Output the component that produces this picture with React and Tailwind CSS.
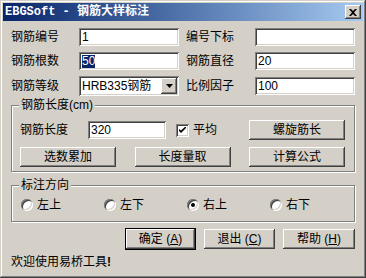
import React from 'react';

const raised = 'shadow-[inset_-1px_-1px_#404040,inset_1px_1px_#ffffff,inset_-2px_-2px_#808080]';
const sunken = 'shadow-[inset_1px_1px_#808080,inset_-1px_-1px_#ffffff,inset_2px_2px_#404040,inset_-2px_-2px_#d4d0c8]';

const Field = ({ value, selected, width = 'w-[100px]' }) => (
  <div className={`${width} h-[18px] bg-white ${sunken} flex items-center pl-[3px]`}>
    {selected ? (
      <span className="bg-[#0a246a] text-white leading-[13px]">{value}</span>
    ) : (
      <span className="leading-[13px]">{value}</span>
    )}
  </div>
);

const Button = ({ children, width = 'w-[96px]', isDefault }) => {
  if (isDefault) {
    return (
      <div className={`${width} h-[22px] border border-black`}>
        <div className={`h-full bg-[#d4d0c8] ${raised} flex items-center justify-center`}>{children}</div>
      </div>
    );
  }
  return (
    <div className={`${width} h-[20px] bg-[#d4d0c8] ${raised} flex items-center justify-center`}>{children}</div>
  );
};

const Radio = ({ label, checked }) => (
  <div className="flex items-center gap-[4px]">
    <div className={`w-[12px] h-[12px] rounded-full bg-white ${sunken} flex items-center justify-center`}>
      {checked && <div className="w-[4px] h-[4px] rounded-full bg-black" />}
    </div>
    <span>{label}</span>
  </div>
);

const Group = ({ title, className, children }) => (
  <div className={`relative border border-[#808080] shadow-[1px_1px_0_#ffffff,inset_1px_1px_0_#ffffff] ${className}`}>
    <span className="absolute left-[7px] top-[-8px] bg-[#d4d0c8] px-[2px] leading-[14px]">{title}</span>
    {children}
  </div>
);

export default function App() {
  return (
    <div className="w-[366px] h-[278px] bg-[#d4d0c8] p-[3px] text-[12px] text-black font-['Liberation_Sans','Noto_Sans_CJK_SC',sans-serif] shadow-[inset_-1px_-1px_#404040,inset_1px_1px_#d4d0c8,inset_-2px_-2px_#808080,inset_2px_2px_#ffffff]">
      {/* title bar */}
      <div className="h-[18px] bg-gradient-to-r from-[#0a246a] to-[#a6caf0] flex items-center justify-between pl-[2px] pr-[2px]">
        <span className="text-white font-bold text-[12px] leading-none font-['Liberation_Mono','Noto_Sans_CJK_SC',monospace]">EBGSoft - 钢筋大样标注</span>
        <div className={`w-[16px] h-[14px] bg-[#d4d0c8] ${raised} flex items-center justify-center`}>
          <svg width="8" height="7" viewBox="0 0 8 7">
            <path d="M0 0h2l2 2 2-2h2L5 3.5 8 7H6L4 5 2 7H0l3-3.5z" fill="#000" />
          </svg>
        </div>
      </div>

      <div className="px-[8px] pt-[7px]">
        <div className="flex items-center h-[18px]">
          <span className="w-[68px]">钢筋编号</span>
          <Field value="1" />
          <span className="w-[69px] ml-[7px]">编号下标</span>
          <Field value="" />
        </div>
        <div className="flex items-center h-[18px] mt-[6px]">
          <span className="w-[68px]">钢筋根数</span>
          <Field value="50" selected />
          <span className="w-[69px] ml-[7px]">钢筋直径</span>
          <Field value="20" />
        </div>
        <div className="flex items-center h-[20px] mt-[6px]">
          <span className="w-[68px]">钢筋等级</span>
          <div className={`w-[100px] h-[20px] bg-white ${sunken} flex items-center justify-between pl-[3px] pr-[2px]`}>
            <span className="leading-[13px]">HRB335钢筋</span>
            <div className={`w-[16px] h-[16px] bg-[#d4d0c8] ${raised} flex items-center justify-center`}>
              <svg width="7" height="4" viewBox="0 0 7 4">
                <path d="M0 0h7L3.5 4z" fill="#000" />
              </svg>
            </div>
          </div>
          <span className="w-[69px] ml-[7px]">比例因子</span>
          <Field value="100" />
        </div>

        <Group title="钢筋长度(cm)" className="mt-[9px] h-[67px] pl-[8px] pr-[9px] pt-[14px]">
          <div className="flex items-center h-[20px]">
            <span className="w-[68px]">钢筋长度</span>
            <Field value="320" width="w-[78px]" />
            <div className={`ml-[10px] w-[13px] h-[13px] bg-white ${sunken} flex items-center justify-center`}>
              <svg width="7" height="7" viewBox="0 0 7 7">
                <path d="M0 2v2l2 2 5-5V0v-1L2 3.5z" fill="#000" />
              </svg>
            </div>
            <span className="ml-[4px]">平均</span>
            <div className="ml-auto">
              <Button>螺旋筋长</Button>
            </div>
          </div>
          <div className="flex items-center justify-between mt-[7px]">
            <Button>选数累加</Button>
            <Button>长度量取</Button>
            <Button>计算公式</Button>
          </div>
        </Group>

        <Group title="标注方向" className="mt-[13px] h-[37px] pl-[9px] flex items-center">
          <div className="grid grid-cols-[83px_83px_83px_83px] pt-[2px]">
            <Radio label="左上" />
            <Radio label="左下" />
            <Radio label="右上" checked />
            <Radio label="右下" />
          </div>
        </Group>

        <div className="flex justify-end gap-[8px] mt-[6px]">
          <Button width="w-[71px]" isDefault>确定 (<u>A</u>)</Button>
          <div className="pt-[1px]"><Button width="w-[71px]">退出 (<u>C</u>)</Button></div>
          <div className="pt-[1px]"><Button width="w-[72px]">帮助 (<u>H</u>)</Button></div>
        </div>

        <div className="mt-[5px] leading-[14px]">欢迎使用易桥工具<b>!</b></div>
      </div>
    </div>
  );
}
